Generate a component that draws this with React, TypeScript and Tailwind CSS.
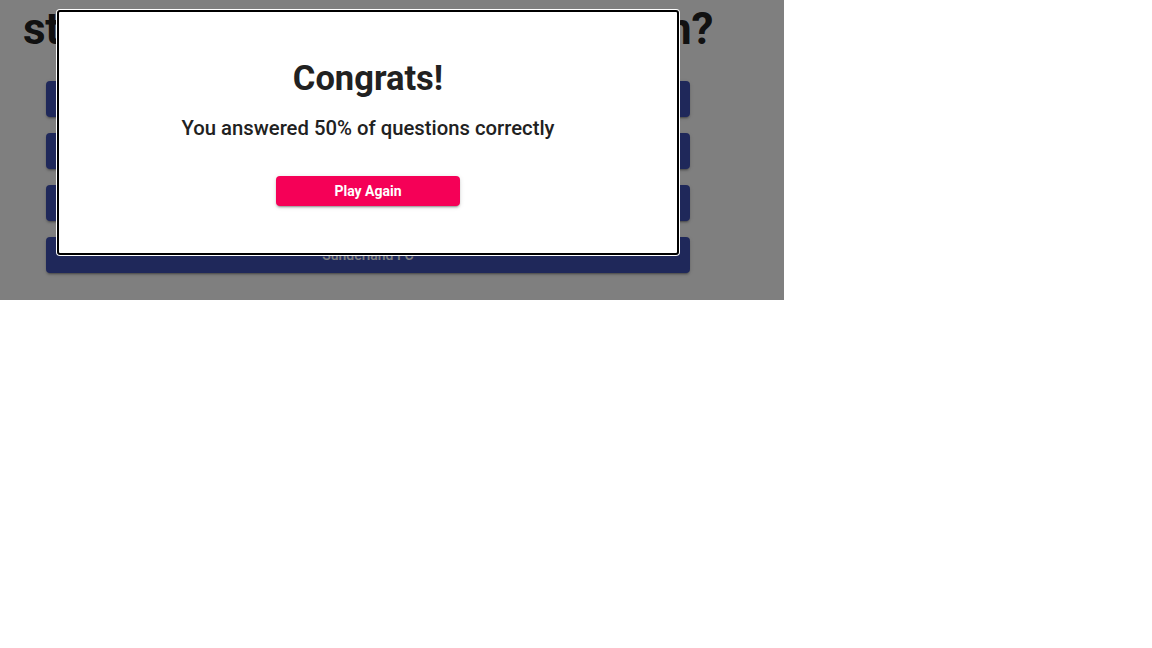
const ANSWERS = ["Newcastle United", "Middlesbrough FC", "Leeds United", "Sunderland FC"];

export default function App() {
  return (
    <div className="min-h-screen bg-white" style={{ fontFamily: "Roboto, 'Liberation Sans', sans-serif" }}>
      <div className="relative w-[784px] h-[300px] overflow-hidden">
        {/* Quiz behind the dialog */}
        <div className="w-[736px] flex flex-col items-center">
          <h1 className="pt-[3px] text-[44px] leading-[52px] font-bold tracking-[-0.3px] text-[#222] text-center whitespace-nowrap">
            stadium of Light is in which region?
          </h1>
          <div className="w-full px-[46px] pt-[26px] flex flex-col gap-4">
            {ANSWERS.map((a) => (
              <button
                key={a}
                className="h-9 w-full rounded bg-[#3f51b5] text-white text-sm font-medium shadow-[0_3px_1px_-2px_rgba(0,0,0,0.2),0_2px_2px_0_rgba(0,0,0,0.14),0_1px_5px_0_rgba(0,0,0,0.12)]"
              >
                {a}
              </button>
            ))}
          </div>
        </div>

        {/* Backdrop + dialog */}
        <div className="absolute inset-0 bg-black/50 pl-[56px] pt-[9px]">
          <div className="w-[624px] h-[247px] bg-white rounded p-px">
            <div className="h-full border-2 border-black rounded-[3px] flex flex-col items-center pt-[45px]">
              <h2 className="text-[34.5px] leading-[42px] font-bold text-[#212121]">Congrats!</h2>
              <p className="mt-[13px] text-[20.3px] leading-8 font-medium text-[#212121]">
                You answered 50% of questions correctly
              </p>
              <button className="mt-[32px] w-[184px] h-[30px] rounded bg-[#f50057] text-white text-sm font-bold shadow-[0_3px_1px_-2px_rgba(0,0,0,0.2),0_2px_2px_0_rgba(0,0,0,0.14),0_1px_5px_0_rgba(0,0,0,0.12)]">
                Play Again
              </button>
            </div>
          </div>
        </div>
      </div>
    </div>
  );
}
